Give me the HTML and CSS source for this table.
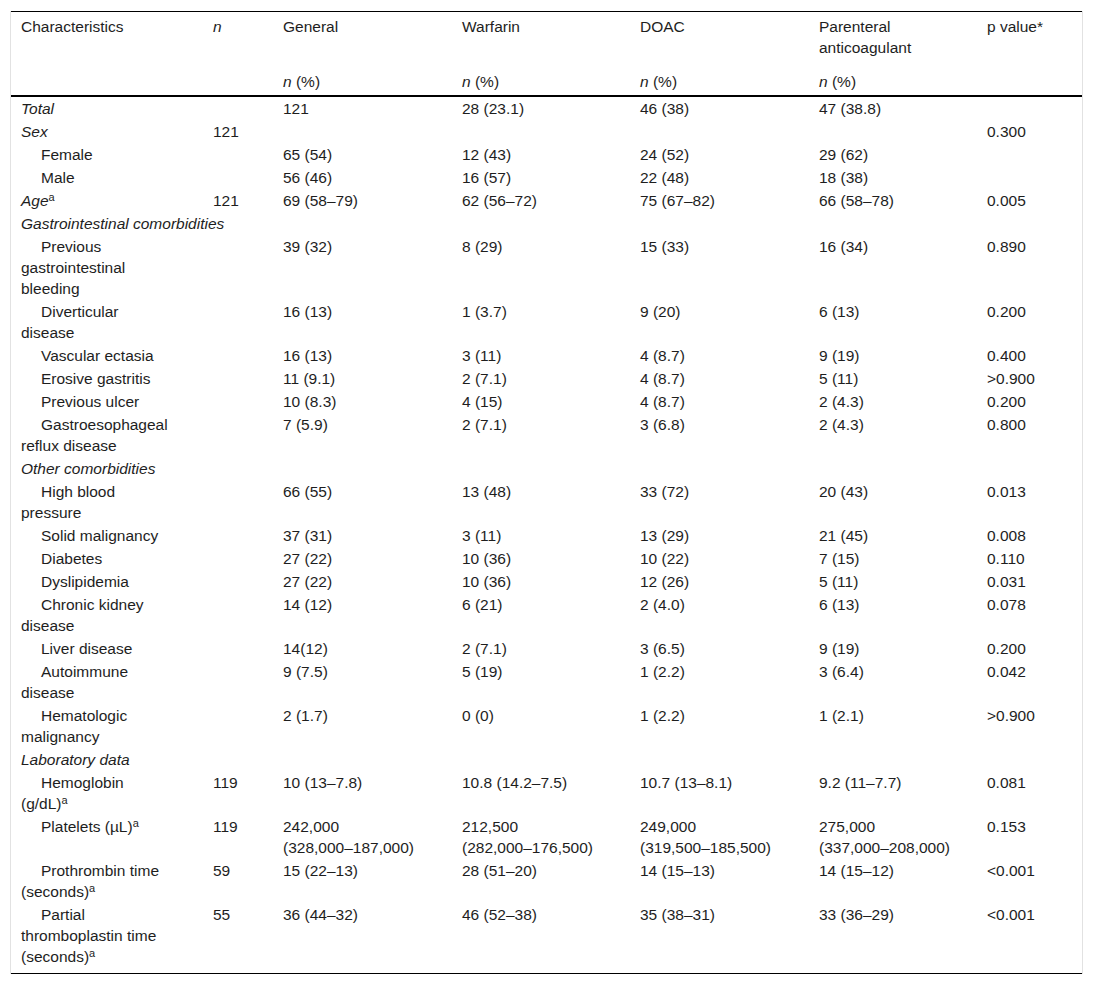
FILE: index.html
```html
<!DOCTYPE html>
<html lang="en">

<head>
    <meta charset="UTF-8">
    <meta name="viewport" content="width=device-width, initial-scale=1.0">
    <title>Characteristics by anticoagulant</title>
    <link rel="stylesheet" href="styles.css">
</head>

<body>
    <div class="table_wrap">
        <table class="data_table">
            <colgroup>
                <col class="c_name">
                <col class="c_n">
                <col class="c_general">
                <col class="c_warfarin">
                <col class="c_doac">
                <col class="c_parent">
                <col class="c_p">
            </colgroup>
            <thead>
                <tr class="head_top">
                    <th>Characteristics</th>
                    <th><i>n</i></th>
                    <th>General</th>
                    <th>Warfarin</th>
                    <th>DOAC</th>
                    <th>Parenteral anticoagulant</th>
                    <th>p value*</th>
                </tr>
                <tr class="head_sub">
                    <th></th>
                    <th></th>
                    <th><i>n</i> (%)</th>
                    <th><i>n</i> (%)</th>
                    <th><i>n</i> (%)</th>
                    <th><i>n</i> (%)</th>
                    <th></th>
                </tr>
            </thead>
            <tbody>
                <tr>
                    <td><i>Total</i></td>
                    <td></td>
                    <td>121</td>
                    <td>28 (23.1)</td>
                    <td>46 (38)</td>
                    <td>47 (38.8)</td>
                    <td></td>
                </tr>
                <tr>
                    <td><i>Sex</i></td>
                    <td>121</td>
                    <td></td>
                    <td></td>
                    <td></td>
                    <td></td>
                    <td>0.300</td>
                </tr>
                <tr>
                    <td class="sub">Female</td>
                    <td></td>
                    <td>65 (54)</td>
                    <td>12 (43)</td>
                    <td>24 (52)</td>
                    <td>29 (62)</td>
                    <td></td>
                </tr>
                <tr>
                    <td class="sub">Male</td>
                    <td></td>
                    <td>56 (46)</td>
                    <td>16 (57)</td>
                    <td>22 (48)</td>
                    <td>18 (38)</td>
                    <td></td>
                </tr>
                <tr>
                    <td><i>Age</i><sup>a</sup></td>
                    <td>121</td>
                    <td>69 (58–79)</td>
                    <td>62 (56–72)</td>
                    <td>75 (67–82)</td>
                    <td>66 (58–78)</td>
                    <td>0.005</td>
                </tr>
                <tr>
                    <td colspan="7"><i>Gastrointestinal comorbidities</i></td>
                </tr>
                <tr>
                    <td class="sub">Previous gastrointestinal bleeding</td>
                    <td></td>
                    <td>39 (32)</td>
                    <td>8 (29)</td>
                    <td>15 (33)</td>
                    <td>16 (34)</td>
                    <td>0.890</td>
                </tr>
                <tr>
                    <td class="sub">Diverticular disease</td>
                    <td></td>
                    <td>16 (13)</td>
                    <td>1 (3.7)</td>
                    <td>9 (20)</td>
                    <td>6 (13)</td>
                    <td>0.200</td>
                </tr>
                <tr>
                    <td class="sub">Vascular ectasia</td>
                    <td></td>
                    <td>16 (13)</td>
                    <td>3 (11)</td>
                    <td>4 (8.7)</td>
                    <td>9 (19)</td>
                    <td>0.400</td>
                </tr>
                <tr>
                    <td class="sub">Erosive gastritis</td>
                    <td></td>
                    <td>11 (9.1)</td>
                    <td>2 (7.1)</td>
                    <td>4 (8.7)</td>
                    <td>5 (11)</td>
                    <td>&gt;0.900</td>
                </tr>
                <tr>
                    <td class="sub">Previous ulcer</td>
                    <td></td>
                    <td>10 (8.3)</td>
                    <td>4 (15)</td>
                    <td>4 (8.7)</td>
                    <td>2 (4.3)</td>
                    <td>0.200</td>
                </tr>
                <tr>
                    <td class="sub">Gastroesophageal reflux disease</td>
                    <td></td>
                    <td>7 (5.9)</td>
                    <td>2 (7.1)</td>
                    <td>3 (6.8)</td>
                    <td>2 (4.3)</td>
                    <td>0.800</td>
                </tr>
                <tr>
                    <td colspan="7"><i>Other comorbidities</i></td>
                </tr>
                <tr>
                    <td class="sub">High blood pressure</td>
                    <td></td>
                    <td>66 (55)</td>
                    <td>13 (48)</td>
                    <td>33 (72)</td>
                    <td>20 (43)</td>
                    <td>0.013</td>
                </tr>
                <tr>
                    <td class="sub">Solid malignancy</td>
                    <td></td>
                    <td>37 (31)</td>
                    <td>3 (11)</td>
                    <td>13 (29)</td>
                    <td>21 (45)</td>
                    <td>0.008</td>
                </tr>
                <tr>
                    <td class="sub">Diabetes</td>
                    <td></td>
                    <td>27 (22)</td>
                    <td>10 (36)</td>
                    <td>10 (22)</td>
                    <td>7 (15)</td>
                    <td>0.110</td>
                </tr>
                <tr>
                    <td class="sub">Dyslipidemia</td>
                    <td></td>
                    <td>27 (22)</td>
                    <td>10 (36)</td>
                    <td>12 (26)</td>
                    <td>5 (11)</td>
                    <td>0.031</td>
                </tr>
                <tr>
                    <td class="sub">Chronic kidney disease</td>
                    <td></td>
                    <td>14 (12)</td>
                    <td>6 (21)</td>
                    <td>2 (4.0)</td>
                    <td>6 (13)</td>
                    <td>0.078</td>
                </tr>
                <tr>
                    <td class="sub">Liver disease</td>
                    <td></td>
                    <td>14(12)</td>
                    <td>2 (7.1)</td>
                    <td>3 (6.5)</td>
                    <td>9 (19)</td>
                    <td>0.200</td>
                </tr>
                <tr>
                    <td class="sub">Autoimmune disease</td>
                    <td></td>
                    <td>9 (7.5)</td>
                    <td>5 (19)</td>
                    <td>1 (2.2)</td>
                    <td>3 (6.4)</td>
                    <td>0.042</td>
                </tr>
                <tr>
                    <td class="sub">Hematologic malignancy</td>
                    <td></td>
                    <td>2 (1.7)</td>
                    <td>0 (0)</td>
                    <td>1 (2.2)</td>
                    <td>1 (2.1)</td>
                    <td>&gt;0.900</td>
                </tr>
                <tr>
                    <td colspan="7"><i>Laboratory data</i></td>
                </tr>
                <tr>
                    <td class="sub">Hemoglobin (g/dL)<sup>a</sup></td>
                    <td>119</td>
                    <td>10 (13–7.8)</td>
                    <td>10.8 (14.2–7.5)</td>
                    <td>10.7 (13–8.1)</td>
                    <td>9.2 (11–7.7)</td>
                    <td>0.081</td>
                </tr>
                <tr>
                    <td class="sub">Platelets (µL)<sup>a</sup></td>
                    <td>119</td>
                    <td>242,000 <span class="nw">(328,000–187,000)</span></td>
                    <td>212,500 <span class="nw">(282,000–176,500)</span></td>
                    <td>249,000 <span class="nw">(319,500–185,500)</span></td>
                    <td>275,000 <span class="nw">(337,000–208,000)</span></td>
                    <td>0.153</td>
                </tr>
                <tr>
                    <td class="sub">Prothrombin time (seconds)<sup>a</sup></td>
                    <td>59</td>
                    <td>15 (22–13)</td>
                    <td>28 (51–20)</td>
                    <td>14 (15–13)</td>
                    <td>14 (15–12)</td>
                    <td>&lt;0.001</td>
                </tr>
                <tr class="last_row">
                    <td class="sub">Partial thromboplastin time (seconds)<sup>a</sup></td>
                    <td>55</td>
                    <td>36 (44–32)</td>
                    <td>46 (52–38)</td>
                    <td>35 (38–31)</td>
                    <td>33 (36–29)</td>
                    <td>&lt;0.001</td>
                </tr>
            </tbody>
        </table>
    </div>
</body>

</html>
```

FILE: styles.css
```css
body {
    margin: 0;
    background: #fff;
    color: #1e1e1e;
    font-family: "Liberation Sans", Arial, sans-serif;
    font-size: 15.5px;
    line-height: 21px;
}

.table_wrap {
    margin: 11px 10px 12px 10px;
    border-left: 1px solid #e2e2e2;
    border-right: 1px solid #e2e2e2;
}

.data_table {
    width: 100%;
    table-layout: fixed;
    border-collapse: collapse;
    border-top: 1px solid #000;
    border-bottom: 1px solid #000;
}

.c_name { width: 191px; }
.c_n { width: 70px; }
.c_general { width: 179px; }
.c_warfarin { width: 178px; }
.c_doac { width: 179px; }
.c_parent { width: 168px; }
.c_p { width: 106px; }

.data_table th,
.data_table td {
    text-align: left;
    vertical-align: top;
    font-weight: normal;
    padding: 1px 10px 1px 11px;
}

/* first column wraps narrow, the reference keeps a wide gap before n */
.data_table th:first-child,
.data_table td:first-child {
    padding-left: 10px;
    padding-right: 36px;
}

.data_table td[colspan] {
    padding-right: 10px;
}

.head_top th {
    padding-top: 4px;
    padding-bottom: 12px;
}

.head_sub th {
    padding-bottom: 3px;
    border-bottom: 2px solid #000;
}

.sub {
    text-indent: 20px;
}

.last_row td {
    padding-bottom: 6px;
}

.nw {
    white-space: nowrap;
}

sup {
    font-size: 11px;
    line-height: 1;
    vertical-align: 5px;
}
```
